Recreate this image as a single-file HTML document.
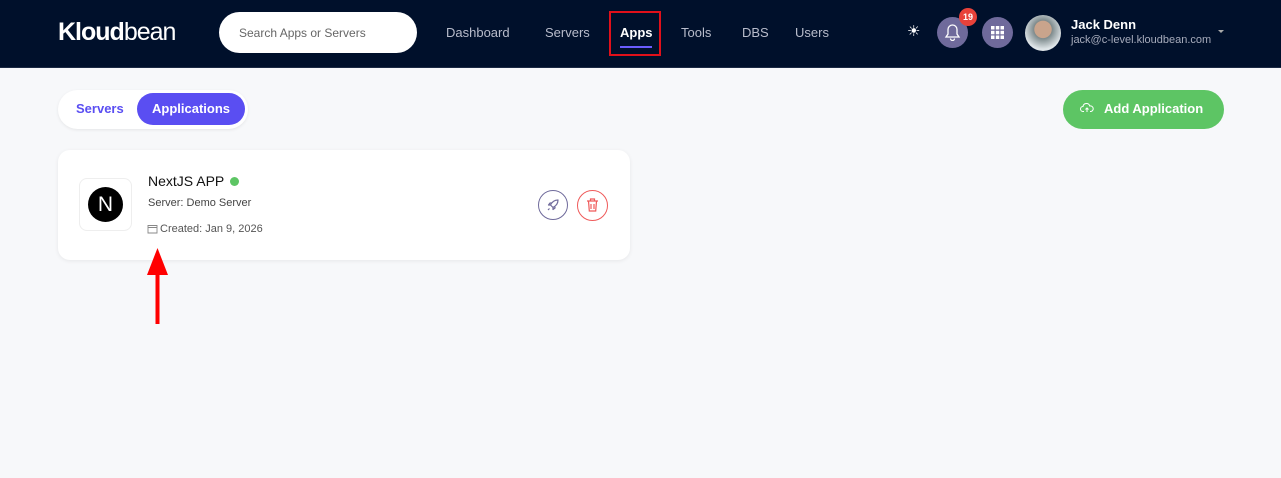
<!DOCTYPE html>
<html><head><style>
body{margin:0;width:1281px;height:478px;background:#f7f8fa;font-family:"Liberation Sans",sans-serif;position:relative;overflow:hidden}
.nav{position:absolute;left:0;top:0;width:1281px;height:67px;background:#00102b;border-bottom:1px solid #1c2a44}
.abs{position:absolute}
.nl{position:absolute;top:25px;color:#b8bccb;font-size:13px}
</style></head><body>
<div class="nav">
<div class="abs" style="left:58px;top:18px;color:#fff;font-size:25px;letter-spacing:-1px"><b>Kloud</b>bean</div>
<div class="abs" style="left:219px;top:12px;width:198px;height:41px;background:#fff;border-radius:21px"></div>
<div class="abs" style="left:239px;top:26px;font-size:12px;color:#666">Search Apps or Servers</div>
<div class="nl" style="left:446px">Dashboard</div>
<div class="nl" style="left:545px">Servers</div>
<div class="nl" style="left:620px;color:#fff;font-weight:bold">Apps</div>
<div class="abs" style="left:620px;top:46px;width:32px;height:2px;background:#6a5cff"></div>
<div class="abs" style="left:609px;top:11px;width:52px;height:45px;border:2px solid #e0101a;box-sizing:border-box"></div>
<div class="nl" style="left:681px">Tools</div>
<div class="nl" style="left:742px">DBS</div>
<div class="nl" style="left:795px">Users</div>
<div class="abs" style="left:907px;top:22px;color:#fff;font-size:15px">☀</div>
<div class="abs" style="left:937px;top:17px;width:31px;height:31px;border-radius:50%;background:#6f6a9b"></div>
<svg class="abs" style="left:944px;top:23px" width="17" height="18" viewBox="0 0 17 18"><path d="M8.5 2a4.5 4.5 0 0 0-4.5 4.5V11L2 14h13l-2-3V6.5A4.5 4.5 0 0 0 8.5 2zM6.5 15.5a2 2 0 0 0 4 0" fill="none" stroke="#fff" stroke-width="1.3"/></svg>
<div class="abs" style="left:959px;top:8px;width:18px;height:18px;border-radius:50%;background:#e8423a;color:#fff;font-size:9px;font-weight:bold;text-align:center;line-height:18px">19</div>
<div class="abs" style="left:982px;top:17px;width:31px;height:31px;border-radius:50%;background:#6f6a9b"></div>
<svg class="abs" style="left:990px;top:25px" width="15" height="15"><g fill="#fff"><rect x="1" y="1" width="3.5" height="3.5"/><rect x="5.8" y="1" width="3.5" height="3.5"/><rect x="10.5" y="1" width="3.5" height="3.5"/><rect x="1" y="5.8" width="3.5" height="3.5"/><rect x="5.8" y="5.8" width="3.5" height="3.5"/><rect x="10.5" y="5.8" width="3.5" height="3.5"/><rect x="1" y="10.5" width="3.5" height="3.5"/><rect x="5.8" y="10.5" width="3.5" height="3.5"/><rect x="10.5" y="10.5" width="3.5" height="3.5"/></g></svg>
<div class="abs" style="left:1025px;top:15px;width:36px;height:36px;border-radius:50%;background:radial-gradient(circle at 50% 40%,#c9a48c 0 30%,#7d8a8c 32%,#dfe5e8 70%)"></div>
<div class="abs" style="left:1071px;top:17px;color:#fff;font-size:13px;font-weight:bold">Jack Denn</div>
<div class="abs" style="left:1071px;top:34px;color:#a6abbb;font-size:11px">jack@c-level.kloudbean.com</div>
<div class="abs" style="left:1218px;top:30px;width:0;height:0;border-left:3px solid transparent;border-right:3px solid transparent;border-top:3px solid #aaa"></div>
</div>
<div class="abs" style="left:58px;top:90px;width:190px;height:39px;background:#fff;border-radius:20px;box-shadow:0 1px 3px rgba(0,0,0,.08)"></div>
<div class="abs" style="left:76px;top:101px;color:#5a4ef2;font-size:13px;font-weight:bold">Servers</div>
<div class="abs" style="left:137px;top:93px;width:108px;height:32px;background:#5a4ef2;border-radius:16px;color:#fff;font-size:13px;font-weight:bold;text-align:center;line-height:32px">Applications</div>
<div class="abs" style="left:1063px;top:90px;width:161px;height:39px;background:#5dc564;border-radius:20px"></div>
<svg class="abs" style="left:1080px;top:102px" width="14" height="11"><path d="M4 9.5H3a2.5 2.5 0 0 1 0-5 3.5 3.5 0 0 1 6.8-.5A2.5 2.5 0 0 1 11 9.5h-1M7 10V6M5.5 7.5L7 6l1.5 1.5" fill="none" stroke="#fff" stroke-width="1"/></svg>
<div class="abs" style="left:1104px;top:101px;color:#fff;font-size:13px;font-weight:bold">Add Application</div>
<div class="abs" style="left:58px;top:150px;width:572px;height:110px;background:#fff;border-radius:12px;box-shadow:0 1px 4px rgba(0,0,0,.07)"></div>
<div class="abs" style="left:79px;top:178px;width:53px;height:53px;border:1px solid #eee;border-radius:8px;box-sizing:border-box"></div>
<div class="abs" style="left:88px;top:187px;width:35px;height:35px;border-radius:50%;background:#000;color:#fff;font-size:21px;text-align:center;line-height:35px">N</div>
<div class="abs" style="left:148px;top:173px;font-size:14px;color:#111">NextJS APP</div>
<div class="abs" style="left:230px;top:177px;width:9px;height:9px;border-radius:50%;background:#5dc564"></div>
<div class="abs" style="left:148px;top:197px;font-size:11px;color:#444">Server: Demo Server</div>
<svg class="abs" style="left:147px;top:223px" width="11" height="11"><path d="M1 2.5h9v7.5H1zM1 4.5h9" fill="none" stroke="#888" stroke-width="0.9"/></svg>
<div class="abs" style="left:160px;top:223px;font-size:11px;color:#555">Created: Jan 9, 2026</div>
<div class="abs" style="left:538px;top:190px;width:30px;height:30px;border:1px solid #6f6a9b;border-radius:50%;box-sizing:border-box"></div>
<svg class="abs" style="left:545px;top:197px" width="16" height="16"><path d="M13 3c-4 0-6 2-7.5 5L8 10.5C11 9 13 7 13 3zM5.5 8L3.5 8 5 6h2M8 10.5V12.5L10 11V9M4.5 11.5L3 13" fill="none" stroke="#6f6a9b" stroke-width="1.2" stroke-linejoin="round"/></svg>
<div class="abs" style="left:577px;top:190px;width:31px;height:31px;border:1px solid #ef5a5a;border-radius:50%;box-sizing:border-box"></div>
<svg class="abs" style="left:585px;top:197px" width="15" height="16"><path d="M2 4h11M5.5 4V2h4v2M3.5 4l.8 10h6.4l.8-10M6 7v5M9 7v5" fill="none" stroke="#ef5a5a" stroke-width="1.2"/></svg>
<svg class="abs" style="left:145px;top:248px" width="25" height="78"><polygon points="12.5,0 23,27 2,27" fill="#f00"/><rect x="10.5" y="25" width="4" height="51" fill="#f00"/></svg>
</body></html>
